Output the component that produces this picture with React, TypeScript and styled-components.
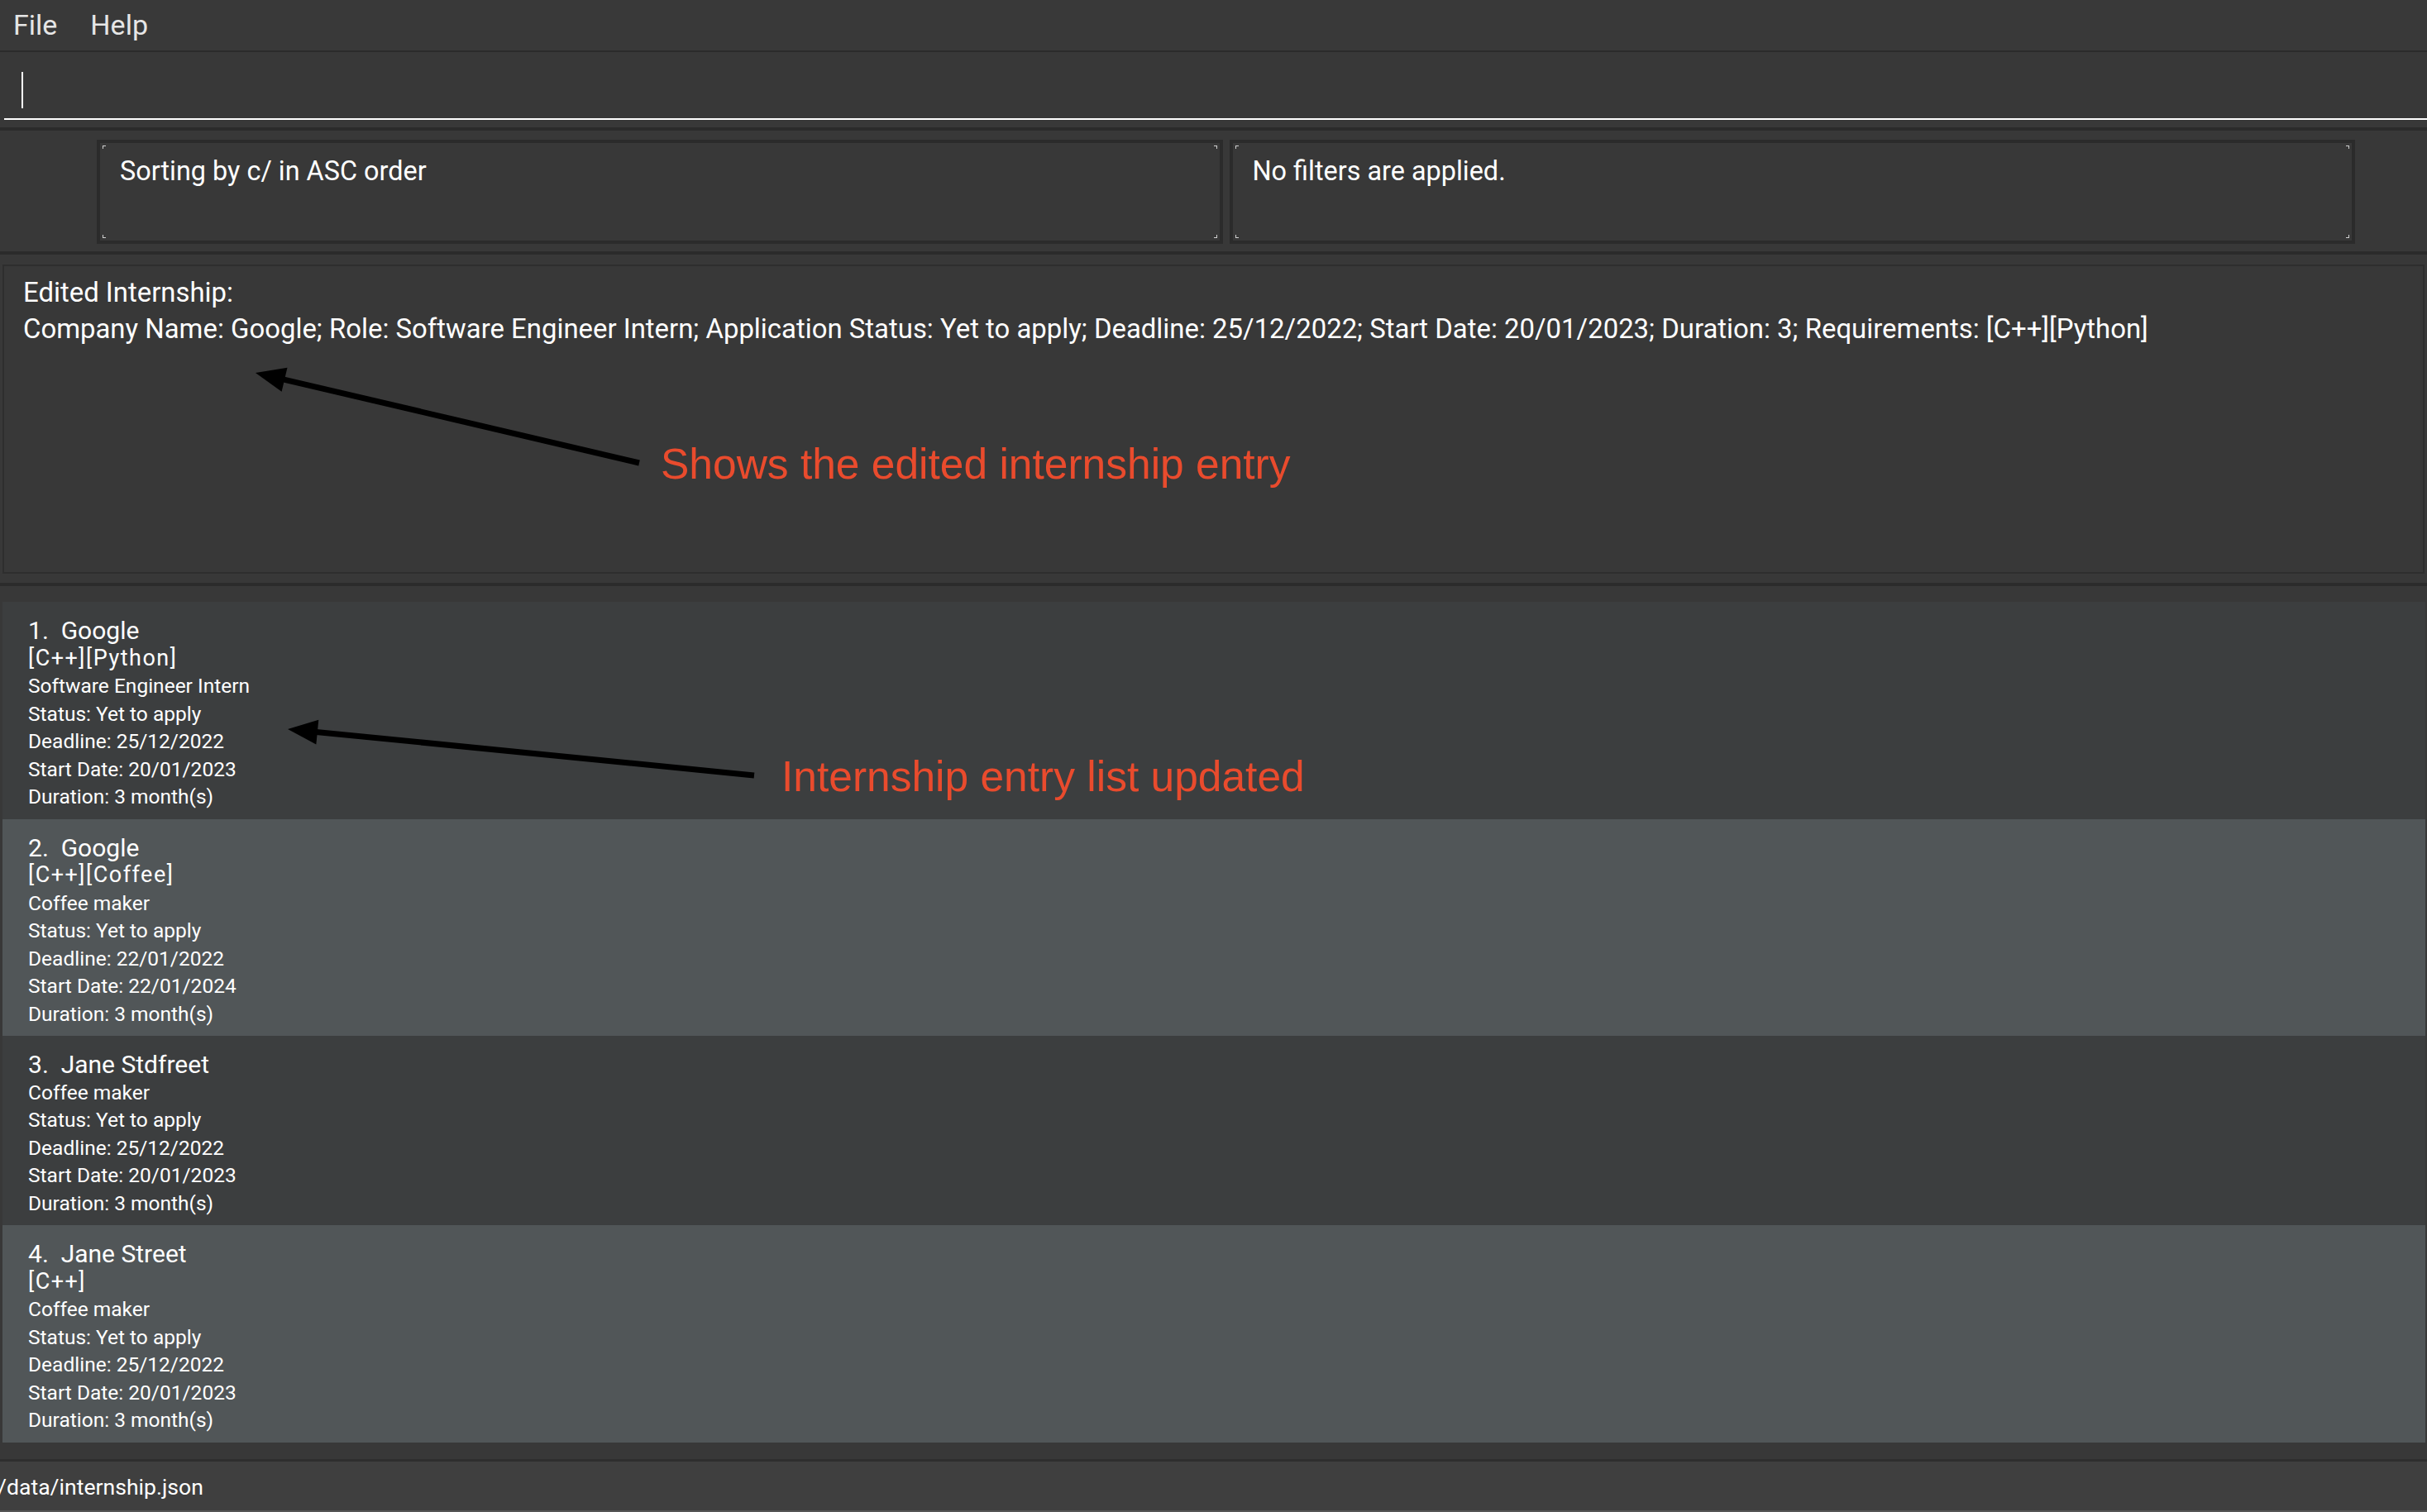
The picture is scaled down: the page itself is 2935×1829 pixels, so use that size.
import React from "react";
import styled, { createGlobalStyle } from "styled-components";

const GlobalStyle = createGlobalStyle`
  html, body {
    margin: 0;
    padding: 0;
    background: #383838;
    overflow: hidden;
  }
  * {
    box-sizing: border-box;
  }
`;

type Internship = {
  company: string;
  tags: string;
  role: string;
  status: string;
  deadline: string;
  start: string;
  duration: string;
};

const internships: Internship[] = [
  {
    company: "Google",
    tags: "[C++][Python]",
    role: "Software Engineer Intern",
    status: "Yet to apply",
    deadline: "25/12/2022",
    start: "20/01/2023",
    duration: "3 month(s)",
  },
  {
    company: "Google",
    tags: "[C++][Coffee]",
    role: "Coffee maker",
    status: "Yet to apply",
    deadline: "22/01/2022",
    start: "22/01/2024",
    duration: "3 month(s)",
  },
  {
    company: "Jane Stdfreet",
    tags: "",
    role: "Coffee maker",
    status: "Yet to apply",
    deadline: "25/12/2022",
    start: "20/01/2023",
    duration: "3 month(s)",
  },
  {
    company: "Jane Street",
    tags: "[C++]",
    role: "Coffee maker",
    status: "Yet to apply",
    deadline: "25/12/2022",
    start: "20/01/2023",
    duration: "3 month(s)",
  },
];

function Arrow({ x1, y1, x2, y2 }: { x1: number; y1: number; x2: number; y2: number }) {
  // x1,y1 = tail, x2,y2 = tip
  const dx = x2 - x1;
  const dy = y2 - y1;
  const len = Math.sqrt(dx * dx + dy * dy);
  const ux = dx / len;
  const uy = dy / len;
  const headLen = 36;
  const half = 15;
  const bx = x2 - ux * headLen;
  const by = y2 - uy * headLen;
  const pts = [
    [x2, y2],
    [bx - uy * half, by + ux * half],
    [bx + uy * half, by - ux * half],
  ]
    .map((p) => p.join(","))
    .join(" ");
  return (
    <g>
      <line x1={x1} y1={y1} x2={bx + ux * 4} y2={by + uy * 4} stroke="#000" strokeWidth={7} />
      <polygon points={pts} fill="#000" />
    </g>
  );
}

function App() {
  return (
    <Window>
      <GlobalStyle />
      <MenuBar>
        <MenuItem>File</MenuItem>
        <MenuItem>Help</MenuItem>
      </MenuBar>

      <CommandBar>
        <CommandField>
          <Caret />
        </CommandField>
      </CommandBar>

      <SortPane>
        <InfoBox>
          <InfoText>Sorting by c/ in ASC order</InfoText>
        </InfoBox>
        <InfoBox>
          <InfoText>No filters are applied.</InfoText>
        </InfoBox>
      </SortPane>

      <ResultPane>
        <ResultBox>
          <ResultLine>Edited Internship:</ResultLine>
          <ResultLine>
            Company Name: Google; Role: Software Engineer Intern; Application Status: Yet to
            apply; Deadline: 25/12/2022; Start Date: 20/01/2023; Duration: 3; Requirements:
            [C++][Python]
          </ResultLine>
        </ResultBox>
      </ResultPane>

      <ListPane>
        {internships.map((item, i) => (
          <Card key={i} $odd={i % 2 === 1}>
            <CardTitle>
              {i + 1}.&nbsp;&nbsp;{item.company}
            </CardTitle>
            {item.tags && <TagLine>{item.tags}</TagLine>}
            <CardLine>{item.role}</CardLine>
            <CardLine>Status: {item.status}</CardLine>
            <CardLine>Deadline: {item.deadline}</CardLine>
            <CardLine>Start Date: {item.start}</CardLine>
            <CardLine>Duration: {item.duration}</CardLine>
          </Card>
        ))}
      </ListPane>

      <StatusBar>
        <StatusText>/data/internship.json</StatusText>
      </StatusBar>

      <Overlay>
        <svg width="2935" height="1829" viewBox="0 0 2935 1829">
          <Arrow x1={773} y1={560} x2={309} y2={451} />
          <Arrow x1={912} y1={938} x2={348} y2={882} />
        </svg>
        <Callout $left={799} $top={535}>
          Shows the edited internship entry
        </Callout>
        <Callout $left={945} $top={913}>
          Internship entry list updated
        </Callout>
      </Overlay>
    </Window>
  );
}

const Window = styled.div`
  position: relative;
  width: 2935px;
  height: 1829px;
  display: flex;
  flex-direction: column;
  background: #383838;
  font-family: Roboto, "Liberation Sans", sans-serif;
  color: #ffffff;
`;

const MenuBar = styled.div`
  height: 63px;
  flex: none;
  display: flex;
  align-items: center;
  gap: 40px;
  padding-left: 16px;
  background: #393939;
  border-bottom: 2px solid #2b2b2b;
`;

const MenuItem = styled.div`
  font-size: 34px;
  line-height: 61px;
  color: #e6e6e6;
`;

const CommandBar = styled.div`
  height: 95px;
  flex: none;
  padding: 0 0 0 5px;
  background: #383838;
  border-bottom: 4px solid #2b2b2b;
`;

const CommandField = styled.div`
  height: 82px;
  border-bottom: 2px solid #ffffff;
  padding: 24px 0 0 21px;
`;

const Caret = styled.div`
  width: 2px;
  height: 44px;
  background: #ffffff;
`;

const SortPane = styled.div`
  height: 150px;
  flex: none;
  display: flex;
  gap: 8px;
  padding: 11px 87px 0 117px;
  background: #383838;
  border-bottom: 4px solid #2b2b2b;
`;

const mark = "#d0d0d0";

const InfoBox = styled.div`
  flex: 1;
  height: 126px;
  border: 4px solid #2b2b2b;
  padding: 15px 0 0 24px;
  background:
    linear-gradient(${mark}, ${mark}) left 3px top 3px / 4px 1px no-repeat,
    linear-gradient(${mark}, ${mark}) left 3px top 3px / 1px 4px no-repeat,
    linear-gradient(${mark}, ${mark}) right 3px top 3px / 4px 1px no-repeat,
    linear-gradient(${mark}, ${mark}) right 3px top 3px / 1px 4px no-repeat,
    linear-gradient(${mark}, ${mark}) left 3px bottom 3px / 4px 1px no-repeat,
    linear-gradient(${mark}, ${mark}) left 3px bottom 3px / 1px 4px no-repeat,
    linear-gradient(${mark}, ${mark}) right 3px bottom 3px / 4px 1px no-repeat,
    linear-gradient(${mark}, ${mark}) right 3px bottom 3px / 1px 4px no-repeat,
    #383838;
`;

const InfoText = styled.div`
  font-size: 32.4px;
  color: #ffffff;
`;

const ResultPane = styled.div`
  height: 401px;
  flex: none;
  padding: 12px 3px 0 3px;
  background: #383838;
  border-bottom: 4px solid #2b2b2b;
`;

const ResultBox = styled.div`
  height: 374px;
  border: 2px solid #2e2e2e;
  padding: 10px 0 0 23px;
  background: #383838;
`;

const ResultLine = styled.div`
  font-size: 32.9px;
  line-height: 44px;
  color: #ffffff;
  white-space: nowrap;
`;

const ListPane = styled.div`
  height: 1059px;
  flex: none;
  padding: 19px 2px 0 3px;
  background: #383838;
  border-bottom: 3px solid #2e2e2e;
  overflow: hidden;
`;

const Card = styled.div<{ $odd: boolean }>`
  padding: 18px 0 10px 31px;
  background: ${(p) => (p.$odd ? "#515658" : "#3c3e3f")};
`;

const CardTitle = styled.div`
  font-size: 30px;
  line-height: 33.5px;
  color: #ffffff;
`;

const TagLine = styled.div`
  font-size: 27px;
  line-height: 33.5px;
  letter-spacing: 1.5px;
  color: #ffffff;
`;

const CardLine = styled.div`
  font-size: 24.5px;
  line-height: 33.5px;
  color: #ffffff;
`;

const StatusBar = styled.div`
  height: 61px;
  flex: none;
  background: #3f3f3f;
  border-bottom: 2px solid #565656;
  padding-top: 3px;
`;

const StatusText = styled.div`
  font-size: 26.6px;
  line-height: 56px;
  margin-left: -3px;
  color: #ffffff;
`;

const Overlay = styled.div`
  position: absolute;
  inset: 0;
  pointer-events: none;
  svg {
    position: absolute;
    top: 0;
    left: 0;
  }
`;

const Callout = styled.div<{ $left: number; $top: number }>`
  position: absolute;
  left: ${(p) => p.$left}px;
  top: ${(p) => p.$top}px;
  font-family: "Liberation Sans", Arial, sans-serif;
  font-size: 51.5px;
  line-height: 52px;
  color: #e94b2d;
  white-space: nowrap;
`;

export default App;
